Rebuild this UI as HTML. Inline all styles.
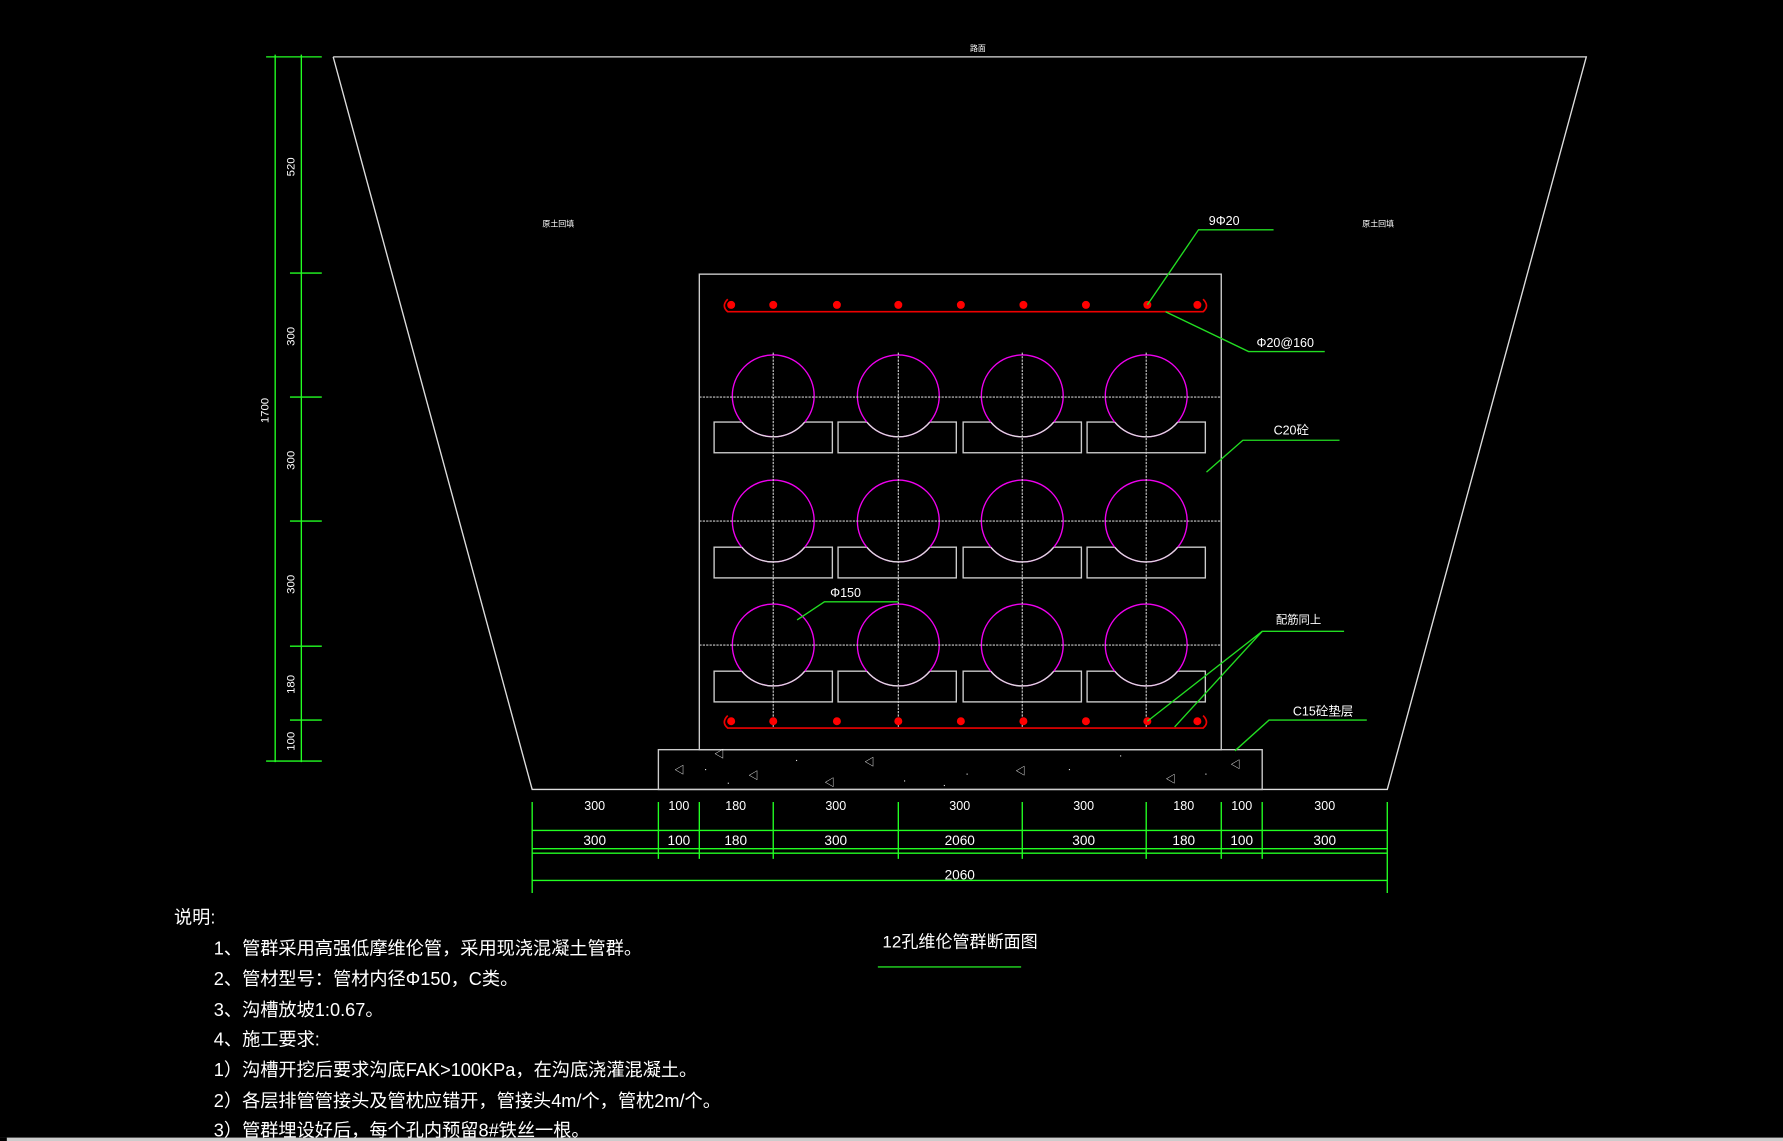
<!DOCTYPE html>
<html><head><meta charset="utf-8"><style>
html,body{margin:0;padding:0;background:#000;}
svg{display:block;}
text{font-family:"Liberation Sans","Noto Sans CJK SC",sans-serif;fill:#fff;}
</style></head><body>
<svg width="1783" height="1141" viewBox="0 0 1568 1003" preserveAspectRatio="none" xmlns="http://www.w3.org/2000/svg">
<rect width="1568" height="1003" fill="#000"/>
<polyline points="293,50 1395,50 1220,694 468,694 293,50" fill="none" stroke="#ddd" stroke-width="1.2"/>
<text x="853" y="45" font-size="7">路面</text>
<text x="477" y="199" font-size="7">原土回填</text>
<text x="1198" y="199" font-size="7">原土回填</text>
<g stroke="#2f2" stroke-width="1.2">
<line x1="242" y1="48" x2="242" y2="670"/><line x1="265" y1="48" x2="265" y2="670"/>
<line x1="234" y1="50" x2="283" y2="50"/><line x1="255" y1="240" x2="283" y2="240"/>
<line x1="255" y1="349" x2="283" y2="349"/><line x1="255" y1="458" x2="283" y2="458"/>
<line x1="255" y1="568" x2="283" y2="568"/><line x1="255" y1="633" x2="283" y2="633"/>
<line x1="234" y1="669" x2="283" y2="669"/>
</g>
<g font-size="10">
<text transform="translate(259,155) rotate(-90)">520</text>
<text transform="translate(259,304) rotate(-90)">300</text>
<text transform="translate(259,413) rotate(-90)">300</text>
<text transform="translate(259,522) rotate(-90)">300</text>
<text transform="translate(259,610) rotate(-90)">180</text>
<text transform="translate(259,660) rotate(-90)">100</text>
<text transform="translate(236,372) rotate(-90)">1700</text>
</g>
<rect x="615" y="241" width="459" height="418" fill="none" stroke="#ccc" stroke-width="1.2"/>
<defs>
<g id="row">
<g fill="none" stroke="#ccc" stroke-width="1.2">
<rect x="628" y="371" width="104" height="27"/><rect x="737" y="371" width="104" height="27"/>
<rect x="847" y="371" width="104" height="27"/><rect x="956" y="371" width="104" height="27"/>
</g>
<g fill="#000" stroke="#e0e" stroke-width="1.2">
<circle cx="680" cy="348" r="36"/><circle cx="790" cy="348" r="36"/><circle cx="899" cy="348" r="36"/><circle cx="1008" cy="348" r="36"/>
</g>
<g fill="none" stroke="#ddd" stroke-width="1.2">
<path d="M652.3,371 A36 36 0 0 0 707.7,371"/><path d="M762.3,371 A36 36 0 0 0 817.7,371"/>
<path d="M871.3,371 A36 36 0 0 0 926.7,371"/><path d="M980.3,371 A36 36 0 0 0 1035.7,371"/>
</g>
</g>
</defs>
<use href="#row"/><use href="#row" y="110"/><use href="#row" y="219"/>
<g stroke="#ccc" stroke-width="1" stroke-dasharray="2,1">
<line x1="615" y1="349" x2="1074" y2="349"/><line x1="615" y1="458" x2="1074" y2="458"/><line x1="615" y1="567" x2="1074" y2="567"/>
<line x1="680" y1="310" x2="680" y2="640"/><line x1="790" y1="310" x2="790" y2="640"/>
<line x1="899" y1="310" x2="899" y2="640"/><line x1="1008" y1="310" x2="1008" y2="640"/>
</g>
<g fill="#f00">
<circle cx="643" cy="268" r="3.5"/><circle cx="680" cy="268" r="3.5"/><circle cx="736" cy="268" r="3.5"/><circle cx="790" cy="268" r="3.5"/><circle cx="845" cy="268" r="3.5"/><circle cx="900" cy="268" r="3.5"/><circle cx="955" cy="268" r="3.5"/><circle cx="1009" cy="268" r="3.5"/><circle cx="1053" cy="268" r="3.5"/>
<circle cx="643" cy="634" r="3.5"/><circle cx="680" cy="634" r="3.5"/><circle cx="736" cy="634" r="3.5"/><circle cx="790" cy="634" r="3.5"/><circle cx="845" cy="634" r="3.5"/><circle cx="900" cy="634" r="3.5"/><circle cx="955" cy="634" r="3.5"/><circle cx="1009" cy="634" r="3.5"/><circle cx="1053" cy="634" r="3.5"/>
</g>
<g stroke="#e00" stroke-width="1.5" fill="none">
<path d="M640,263 Q634,269 640,274 L1058,274 Q1064,269 1058,263"/>
<path d="M640,629 Q634,635 640,640 L1058,640 Q1064,635 1058,629"/>
</g>
<rect x="579" y="659" width="531" height="35" fill="none" stroke="#ccc" stroke-width="1.2"/>
<g fill="#ddd" font-size="9">
<text x="593" y="680">◁</text><text x="628" y="666">◁</text><text x="658" y="685">◁</text><text x="725" y="691">◁</text>
<text x="760" y="673">◁</text><text x="893" y="681">◁</text><text x="1025" y="688">◁</text><text x="1082" y="675">◁</text>
<rect x="620" y="676" width="1" height="1"/><rect x="700" y="668" width="1" height="1"/><rect x="795" y="686" width="1" height="1"/>
<rect x="850" y="680" width="1" height="1"/><rect x="940" y="676" width="1" height="1"/><rect x="985" y="664" width="1" height="1"/>
<rect x="1060" y="680" width="1" height="1"/><rect x="830" y="690" width="1" height="1"/><rect x="640" y="688" width="1" height="1"/>
</g>
<g stroke="#2f2" stroke-width="1.2">
<line x1="468" y1="730" x2="1220" y2="730"/><line x1="468" y1="746" x2="1220" y2="746"/><line x1="468" y1="750" x2="1220" y2="750"/><line x1="468" y1="774" x2="1220" y2="774"/>
<line x1="468" y1="705" x2="468" y2="785"/><line x1="1220" y1="705" x2="1220" y2="785"/>
<line x1="579" y1="705" x2="579" y2="755"/><line x1="615" y1="705" x2="615" y2="755"/><line x1="680" y1="705" x2="680" y2="755"/>
<line x1="790" y1="705" x2="790" y2="755"/><line x1="899" y1="705" x2="899" y2="755"/><line x1="1008" y1="705" x2="1008" y2="755"/>
<line x1="1074" y1="705" x2="1074" y2="755"/><line x1="1110" y1="705" x2="1110" y2="755"/>
</g>
<g font-size="11" text-anchor="middle">
<text x="523" y="712">300</text><text x="597" y="712">100</text><text x="647" y="712">180</text><text x="735" y="712">300</text><text x="844" y="712">300</text><text x="953" y="712">300</text><text x="1041" y="712">180</text><text x="1092" y="712">100</text><text x="1165" y="712">300</text>
<text x="523" y="743" font-size="12">300</text><text x="597" y="743" font-size="12">100</text><text x="647" y="743" font-size="12">180</text><text x="735" y="743" font-size="12">300</text><text x="844" y="743" font-size="12">2060</text><text x="953" y="743" font-size="12">300</text><text x="1041" y="743" font-size="12">180</text><text x="1092" y="743" font-size="12">100</text><text x="1165" y="743" font-size="12">300</text>
<text x="844" y="773" font-size="12">2060</text>
</g>
<g stroke="#2d2" stroke-width="1.2" fill="none">
<polyline points="1009,268 1054,202 1120,202"/>
<polyline points="1025,274 1098,309 1165,309"/>
<polyline points="1061,415 1093,387 1178,387"/>
<polyline points="701,545 725,529 790,529"/>
<polyline points="1009,634 1110,555 1182,555"/>
<line x1="1033" y1="639" x2="1110" y2="555"/>
<polyline points="1086,660 1116,633 1202,633"/>
<line x1="772" y1="850" x2="898" y2="850"/>
</g>
<g font-size="11">
<text x="1063" y="198">9Φ20</text>
<text x="1105" y="305">Φ20@160</text>
<text x="1120" y="382">C20砼</text>
<text x="730" y="525">Φ150</text>
<text x="1122" y="548" font-size="10">配筋同上</text>
<text x="1137" y="629">C15砼垫层</text>
</g>
<text x="776" y="833" font-size="15">12孔维伦管群断面图</text>
<g font-size="16">
<text x="153" y="812">说明:</text>
<text x="188" y="839">1、管群采用高强低摩维伦管，采用现浇混凝土管群。</text>
<text x="188" y="866">2、管材型号：管材内径Φ150，C类。</text>
<text x="188" y="893">3、沟槽放坡1:0.67。</text>
<text x="188" y="919">4、施工要求:</text>
<text x="188" y="946">1）沟槽开挖后要求沟底FAK&gt;100KPa，在沟底浇灌混凝土。</text>
<text x="188" y="973">2）各层排管管接头及管枕应错开，管接头4m/个，管枕2m/个。</text>
<text x="188" y="999">3）管群埋设好后，每个孔内预留8#铁丝一根。</text>
</g>
<rect x="0" y="1000" width="1568" height="3" fill="#ccc"/>
<rect x="0" y="1000" width="6" height="3" fill="#000"/>
</svg>
</body></html>
